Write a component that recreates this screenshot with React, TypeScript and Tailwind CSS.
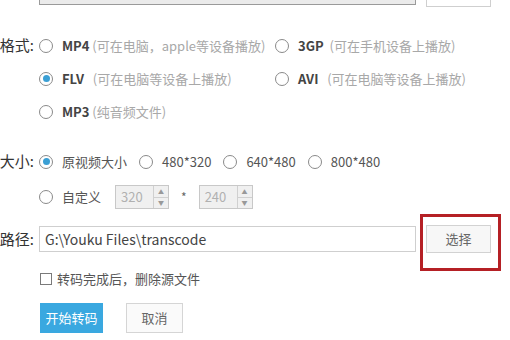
// Transcode settings panel
const font = { fontFamily: '"Noto Sans CJK SC", "Noto Sans", sans-serif' };

function Radio({ checked = false }: { checked?: boolean }) {
  return (
    <span className="flex h-[14px] w-[14px] shrink-0 items-center justify-center rounded-full border border-[#8a8a8a] bg-white">
      {checked && <span className="h-[7px] w-[7px] rounded-full bg-[#3a9fd4]" />}
    </span>
  );
}

function Label({ text }: { text: string }) {
  return (
    <div className="mr-[5px] flex w-[34px] shrink-0 justify-end whitespace-nowrap text-[15px] text-[#333]">
      {text}
    </div>
  );
}

function FormatOption({
  name,
  desc,
  checked,
  width,
}: {
  name: string;
  desc: string;
  checked?: boolean;
  width?: string;
}) {
  return (
    <div className={`flex items-center gap-[9px] ${width ?? ""}`}>
      <Radio checked={checked} />
      <span className="whitespace-pre text-[13px]">
        <span className="font-bold text-[#444]">{name}</span>
        <span className="text-[#a8a8a8]">{desc}</span>
      </span>
    </div>
  );
}

function SizeOption({ text, checked }: { text: string; checked?: boolean }) {
  return (
    <div className="flex items-center gap-[9px]">
      <Radio checked={checked} />
      <span className="whitespace-nowrap text-[13px] text-[#555]">{text}</span>
    </div>
  );
}

function Spin({ value }: { value: string }) {
  return (
    <div className="flex h-[24px] w-[54px] border border-[#c8c8c8] bg-[#f0f0f0]">
      <div className="flex flex-1 items-center pl-[5px] text-[13px] text-[#b0b0b0]">{value}</div>
      <div className="flex w-[15px] flex-col border-l border-[#d0d0d0]">
        <div className="flex flex-1 items-center justify-center border-b border-[#d0d0d0] text-[6px] text-[#999]">▲</div>
        <div className="flex flex-1 items-center justify-center text-[6px] text-[#999]">▼</div>
      </div>
    </div>
  );
}

export default function App() {
  return (
    <div className="h-[340px] w-[510px] overflow-hidden bg-white" style={font}>
      {/* top input, mostly cut off */}
      <div className="-mt-[23px] flex h-[30px] items-end">
        <div className="w-[39px] shrink-0" />
        <div className="mb-[2px] h-[26px] w-[377px] border border-[#9a9a9a] bg-[#ebebeb]" />
        <div className="ml-[10px] h-[30px] w-[65px] border border-[#cfcfcf] bg-white" />
      </div>

      {/* 格式 */}
      <div className="mt-[22px] flex h-[33px] items-center">
        <Label text="格式:" />
        <FormatOption name="MP4" desc=" (可在电脑，apple等设备播放)" width="w-[236px]" />
        <FormatOption name="3GP" desc="  (可在手机设备上播放)" />
      </div>
      <div className="flex h-[33px] items-center">
        <Label text="" />
        <FormatOption name="FLV" desc="   (可在电脑等设备上播放)" checked width="w-[236px]" />
        <FormatOption name="AVI" desc="   (可在电脑等设备上播放)" />
      </div>
      <div className="flex h-[33px] items-center">
        <Label text="" />
        <FormatOption name="MP3" desc=" (纯音频文件)" />
      </div>

      {/* 大小 */}
      <div className="mt-[17px] flex h-[33px] items-center gap-[12px]">
        <div className="-mr-[12px]">
          <Label text="大小:" />
        </div>
        <SizeOption text="原视频大小" checked />
        <SizeOption text="480*320" />
        <SizeOption text="640*480" />
        <SizeOption text="800*480" />
      </div>
      <div className="flex h-[38px] items-center">
        <Label text="" />
        <SizeOption text="自定义" />
        <div className="ml-[14px]">
          <Spin value="320" />
        </div>
        <span className="mx-[12px] text-[12px] text-[#666]">*</span>
        <Spin value="240" />
      </div>

      {/* 路径 */}
      <div className="flex h-[46px] items-center">
        <Label text="路径:" />
        <div className="flex h-[26px] w-[377px] items-center border border-[#cfcfcf] bg-white pl-[5px] text-[14px] text-[#444]">
          G:\Youku Files\transcode
        </div>
        <div className="relative ml-[10px]">
          <button className="h-[28px] w-[65px] border border-[#d2d2d2] bg-[#f7f7f7] text-[13px] text-[#666]">
            选择
          </button>
          <div className="pointer-events-none absolute -left-[6px] -top-[11px] h-[57px] w-[81px] border-[3px] border-[#b52025]" />
        </div>
      </div>

      {/* checkbox */}
      <div className="flex h-[34px] items-center">
        <div className="w-[40px] shrink-0" />
        <span className="h-[12px] w-[12px] border border-[#7a7a7a] bg-white" />
        <span className="ml-[5px] text-[13px] text-[#555]">转码完成后，删除源文件</span>
      </div>

      {/* buttons */}
      <div className="mt-[7px] flex items-center">
        <div className="w-[40px] shrink-0" />
        <button className="h-[30px] w-[63px] bg-[#3aa8e0] text-[13px] text-white">开始转码</button>
        <button className="ml-[23px] h-[30px] w-[57px] border border-[#d5d5d5] bg-[#fafafa] text-[13px] text-[#666]">
          取消
        </button>
      </div>
    </div>
  );
}
